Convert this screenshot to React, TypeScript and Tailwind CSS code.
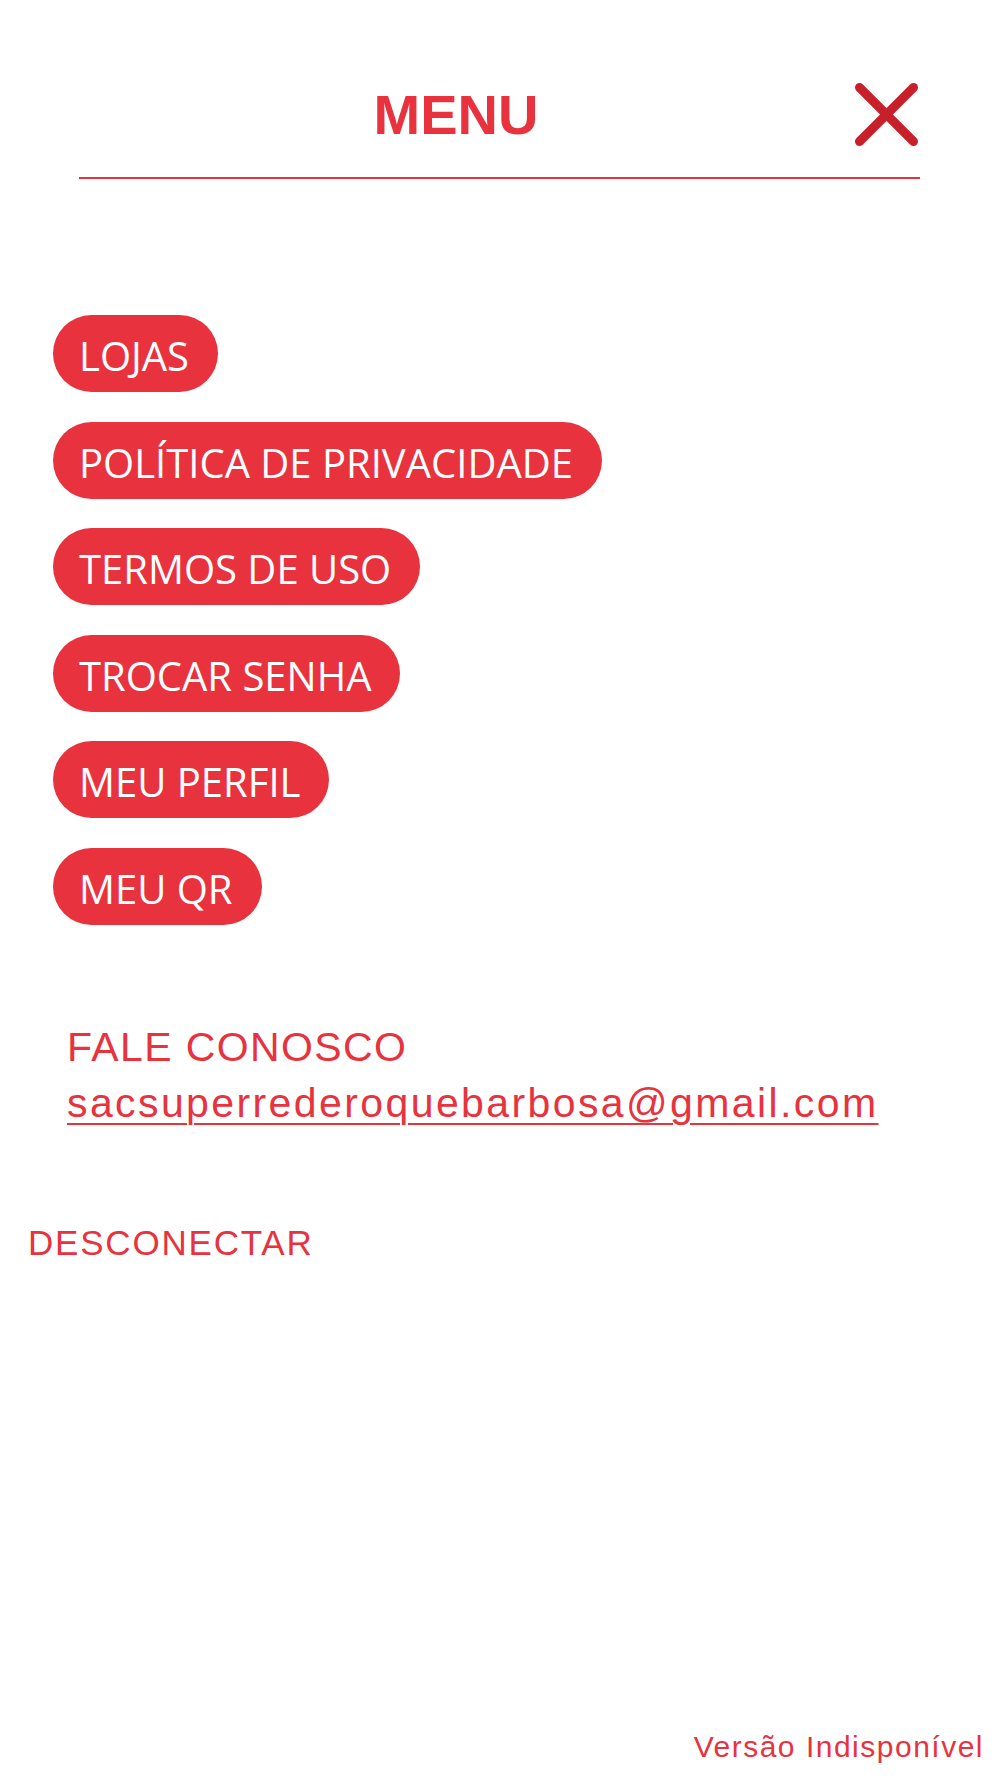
import React from "react";

const items = [
  "LOJAS",
  "POLÍTICA DE PRIVACIDADE",
  "TERMOS DE USO",
  "TROCAR SENHA",
  "MEU PERFIL",
  "MEU QR",
];

export default function App() {
  return (
    <div className="w-[1000px] h-[1778px] bg-white flex flex-col" style={{ fontFamily: '"Liberation Sans", Arial, sans-serif' }}>
      {/* Header */}
      <div className="ml-[79px] w-[841px] flex flex-col">
        <div className="flex items-start pt-[83px]">
          <div className="flex-1 text-center mt-[4px] pr-[22px] text-[56px] leading-none font-bold text-[#e8323e]">MENU</div>
          <div className="w-[63px] h-[63px] mr-[2px]">
            <svg width="63" height="63" viewBox="0 0 63 63">
              <line x1="4.5" y1="4.5" x2="58.5" y2="58.5" stroke="#c8202a" strokeWidth="9" strokeLinecap="round" />
              <line x1="58.5" y1="4.5" x2="4.5" y2="58.5" stroke="#c8202a" strokeWidth="9" strokeLinecap="round" />
            </svg>
          </div>
        </div>
        <div className="mt-[31px] h-[2px] bg-[#e8323e]" />
      </div>

      {/* Pills */}
      <div className="mt-[136px] ml-[53px] flex flex-col items-start gap-[29.6px]">
        {items.map((t) => (
          <div
            key={t}
            className="h-[77px] rounded-full bg-[#e8333f] pl-[26px] pr-[29px] pt-[5px] flex items-center text-white text-[40px] leading-none"
            style={{ fontFamily: '"Open Sans", sans-serif' }}
          >
            {t}
          </div>
        ))}
      </div>

      {/* Contact */}
      <div className="mt-[94px] ml-[67px] flex flex-col text-[41px] leading-[56px] text-[#e8323e]">
        <div className="tracking-[1.4px]">FALE CONOSCO</div>
        <a className="underline decoration-[2px] underline-offset-[6px] tracking-[2.4px]">sacsuperrederoquebarbosa@gmail.com</a>
      </div>

      <div className="mt-[94px] ml-[28px] text-[35px] leading-none tracking-[1.8px] text-[#e8323e]">DESCONECTAR</div>

      <div className="mt-auto mb-[16px] self-end mr-[16px] text-[30px] leading-none tracking-[1.5px] text-[#e8323e]">Versão Indisponível</div>
    </div>
  );
}
